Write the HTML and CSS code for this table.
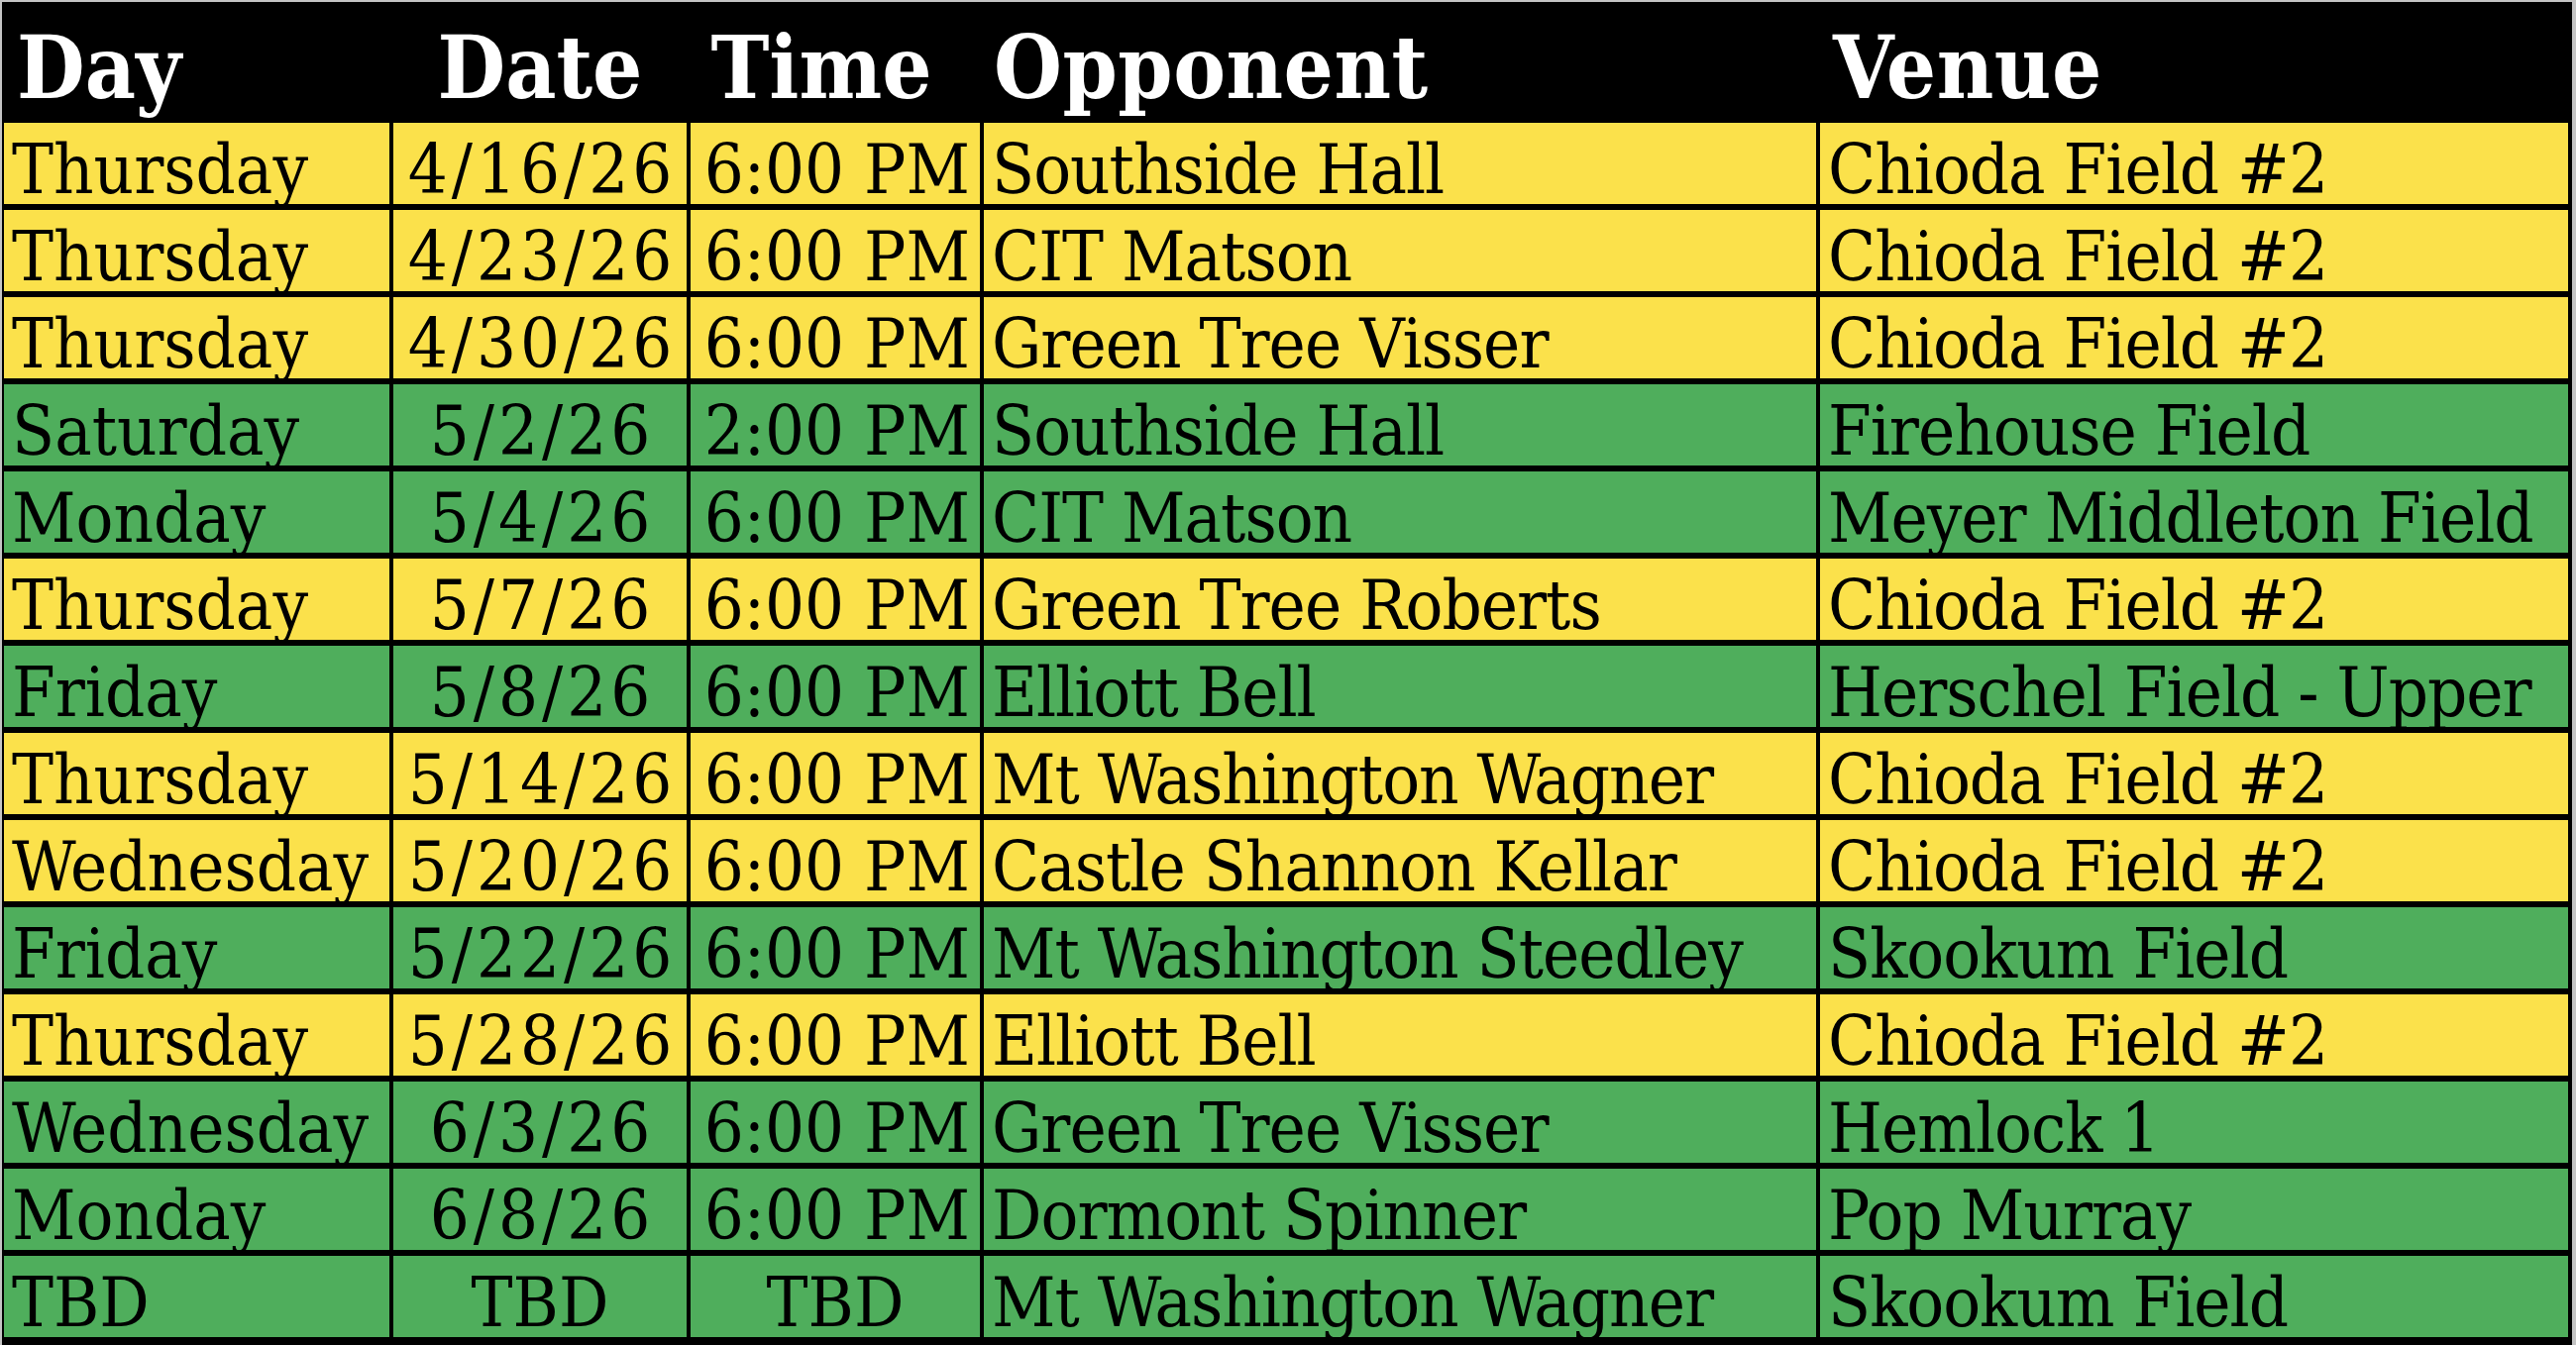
FILE: index.html
```html
<!DOCTYPE html>
<html>
<head>
<meta charset="utf-8">
<title>Schedule</title>
<link rel="stylesheet" href="styles.css">
</head>
<body>
<div class="sheet">
  <div class="row head">
    <div class="cell left head-day">Day</div>
    <div class="cell center">Date</div>
    <div class="cell center head-time">Time</div>
    <div class="cell left head-opp">Opponent</div>
    <div class="cell left head-venue">Venue</div>
  </div>
  <div class="row yellow"><div class="cell left">Thursday</div><div class="cell center date">4/16/26</div><div class="cell right">6:00 PM</div><div class="cell left name">Southside Hall</div><div class="cell left name">Chioda Field #2</div></div>
  <div class="row yellow"><div class="cell left">Thursday</div><div class="cell center date">4/23/26</div><div class="cell right">6:00 PM</div><div class="cell left name">CIT Matson</div><div class="cell left name">Chioda Field #2</div></div>
  <div class="row yellow"><div class="cell left">Thursday</div><div class="cell center date">4/30/26</div><div class="cell right">6:00 PM</div><div class="cell left name">Green Tree Visser</div><div class="cell left name">Chioda Field #2</div></div>
  <div class="row green"><div class="cell left">Saturday</div><div class="cell center date">5/2/26</div><div class="cell right">2:00 PM</div><div class="cell left name">Southside Hall</div><div class="cell left name">Firehouse Field</div></div>
  <div class="row green"><div class="cell left">Monday</div><div class="cell center date">5/4/26</div><div class="cell right">6:00 PM</div><div class="cell left name">CIT Matson</div><div class="cell left name">Meyer Middleton Field</div></div>
  <div class="row yellow"><div class="cell left">Thursday</div><div class="cell center date">5/7/26</div><div class="cell right">6:00 PM</div><div class="cell left name">Green Tree Roberts</div><div class="cell left name">Chioda Field #2</div></div>
  <div class="row green"><div class="cell left">Friday</div><div class="cell center date">5/8/26</div><div class="cell right">6:00 PM</div><div class="cell left name">Elliott Bell</div><div class="cell left name">Herschel Field - Upper</div></div>
  <div class="row yellow"><div class="cell left">Thursday</div><div class="cell center date">5/14/26</div><div class="cell right">6:00 PM</div><div class="cell left name">Mt Washington Wagner</div><div class="cell left name">Chioda Field #2</div></div>
  <div class="row yellow"><div class="cell left">Wednesday</div><div class="cell center date">5/20/26</div><div class="cell right">6:00 PM</div><div class="cell left name">Castle Shannon Kellar</div><div class="cell left name">Chioda Field #2</div></div>
  <div class="row green"><div class="cell left">Friday</div><div class="cell center date">5/22/26</div><div class="cell right">6:00 PM</div><div class="cell left name">Mt Washington Steedley</div><div class="cell left name">Skookum Field</div></div>
  <div class="row yellow"><div class="cell left">Thursday</div><div class="cell center date">5/28/26</div><div class="cell right">6:00 PM</div><div class="cell left name">Elliott Bell</div><div class="cell left name">Chioda Field #2</div></div>
  <div class="row green"><div class="cell left">Wednesday</div><div class="cell center date">6/3/26</div><div class="cell right">6:00 PM</div><div class="cell left name">Green Tree Visser</div><div class="cell left name">Hemlock 1</div></div>
  <div class="row green"><div class="cell left">Monday</div><div class="cell center date">6/8/26</div><div class="cell right">6:00 PM</div><div class="cell left name">Dormont Spinner</div><div class="cell left name">Pop Murray</div></div>
  <div class="row green"><div class="cell left">TBD</div><div class="cell center">TBD</div><div class="cell center">TBD</div><div class="cell left name">Mt Washington Wagner</div><div class="cell left name">Skookum Field</div></div>
</div>
</body>
</html>
```
FILE: styles.css
```css
html, body {
  margin: 0;
  padding: 0;
}
body {
  background: #c4c4c4;
  width: 2600px;
  height: 1358px;
  overflow: hidden;
  padding: 2px 0 0 2px;
  box-sizing: border-box;
  font-family: "DejaVu Serif Condensed", "DejaVu Serif", serif;
  font-stretch: condensed;
  color: #000;
}
.sheet {
  width: 2594px;
  background: #000;
  display: flex;
  flex-direction: column;
  row-gap: 6px;
  padding: 0 4px 8px 2px;
  box-sizing: border-box;
}
.row {
  display: grid;
  grid-template-columns: 389px 296px 292px 840px 755px;
  column-gap: 4px;
  height: 82px;
}
.cell {
  display: flex;
  align-items: flex-end;
  font-size: 70px;
  line-height: 1;
  white-space: nowrap;
  overflow: visible;
  padding: 0 8px;
}
.left { justify-content: flex-start; }
.center { justify-content: center; }
.right { justify-content: flex-end; padding-right: 10px; }
.date { letter-spacing: 4px; padding-left: 12px; }
.name { letter-spacing: -1px; }
.yellow .cell { background: #fbe14b; }
.green .cell { background: #4fae5c; }
.head {
  height: 116px;
}
.head .cell {
  background: #000;
  color: #fff;
  font-weight: bold;
  font-size: 88px;
  padding-bottom: 6px;
}
.head-day { padding-left: 13px; }
.head-time { padding-right: 36px; }
.head-opp { padding-left: 10px; letter-spacing: 0.5px; }
.head-venue { padding-left: 13px; letter-spacing: 0.5px; }
```
